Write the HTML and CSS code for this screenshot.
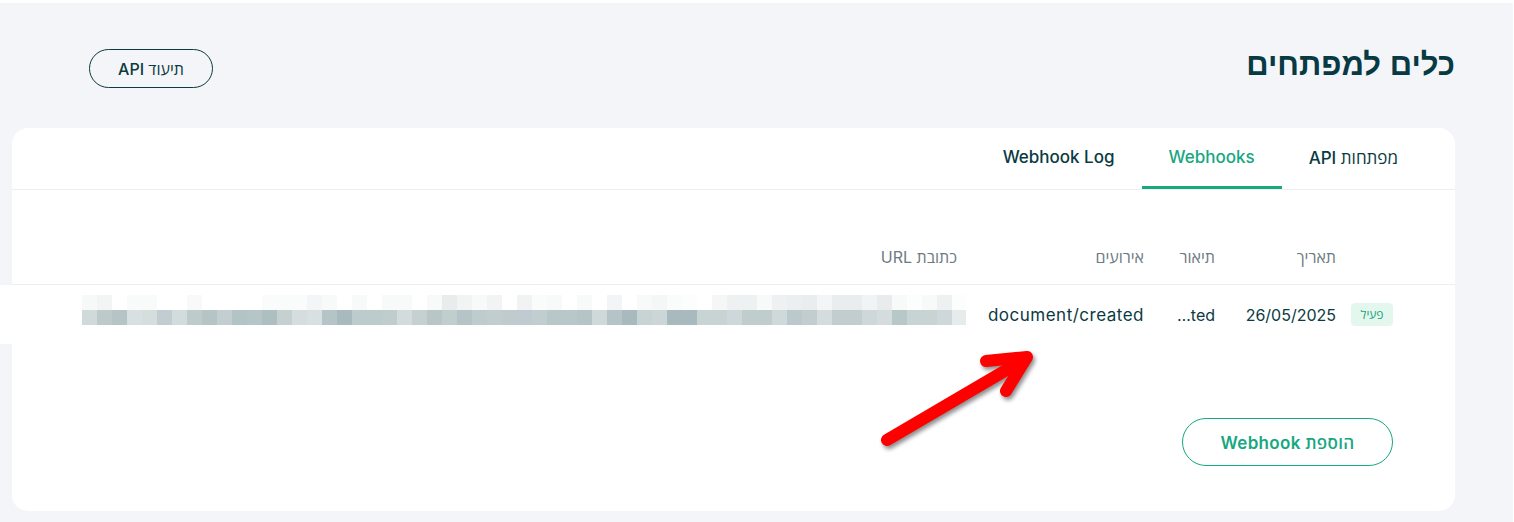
FILE: index.html
```html
<!DOCTYPE html>
<html lang="he" dir="rtl">
<head>
<meta charset="utf-8">
<title>כלים למפתחים</title>
<link rel="stylesheet" href="styles.css">
</head>
<body>
<div class="page">
  <header class="page-header">
    <h1 class="title">כלים למפתחים</h1>
    <button class="btn btn-outline-dark">תיעוד API</button>
  </header>
  <section class="card">
    <nav class="tabs">
      <div class="tab">מפתחות API</div>
      <div class="tab active">Webhooks</div>
      <div class="tab">Webhook Log</div>
    </nav>
    <div class="table">
      <div class="row head">
        <div class="cell"></div>
        <div class="cell">תאריך</div>
        <div class="cell">תיאור</div>
        <div class="cell">אירועים</div>
        <div class="cell">כתובת URL</div>
      </div>
      <div class="row body">
        <div class="cell"><span class="badge">פעיל</span></div>
        <div class="cell">26/05/2025</div>
        <div class="cell"><span dir="ltr">…ted</span></div>
        <div class="cell wide">document/created</div>
        <div class="cell"></div>
      </div>
    </div>
    <div class="actions">
      <button class="btn btn-outline-green">הוספת Webhook</button>
    </div>
  </section>
</div>
<div class="redacted">
  <div class="px px-1"></div>
  <div class="px px-2"></div>
</div>
<svg class="arrow" width="180" height="120" viewBox="0 0 180 120">
  <g fill="none" stroke="#ff0000" stroke-width="12" stroke-linecap="round" stroke-linejoin="round">
    <path d="M17 100 L155 19"/>
    <path d="M116 21 L157 17 L136 51"/>
  </g>
</svg>
</body>
</html>
```
FILE: styles.css
```css
* { box-sizing: border-box; }
html, body { margin: 0; padding: 0; background: #ffffff; }
body {
  font-family: "Inter", "Open Sans", "Liberation Sans", sans-serif;
  color: #0b3a42;
  width: 1514px;
  height: 522px;
  overflow: hidden;
}
.page {
  margin-top: 3px;
  margin-right: 1px;
  height: 519px;
  background: #f4f5f8;
  padding: 0 58px 11px 12px;
  display: flex;
  flex-direction: column;
}
.page-header {
  display: flex;
  align-items: center;
  justify-content: space-between;
  height: 125px;
  padding-left: 77px;
  padding-bottom: 2px;
}
.title {
  margin: 0;
  font-family: "Liberation Sans", "Open Sans", sans-serif;
  font-size: 31px;
  font-weight: 700;
  color: #073a43;
  line-height: 1;
}
.btn {
  font-family: "Inter", "Open Sans", "Liberation Sans", sans-serif;
  background: transparent;
  border-radius: 999px;
  cursor: pointer;
}
.btn-outline-dark {
  width: 124px;
  height: 39px;
  border: 1px solid #0b3a42;
  color: #0b3a42;
  font-size: 16px;
  font-weight: 500;
  margin-top: 8px;
}
.card {
  flex: 1;
  background: #ffffff;
  border-radius: 16px;
  display: flex;
  flex-direction: column;
}
.tabs {
  display: flex;
  height: 62px;
  padding-right: 30px;
  border-bottom: 1px solid #eceef1;
}
.tab {
  display: flex;
  align-items: center;
  padding: 0 27px 3px;
  font-size: 17px;
  font-weight: 500;
  color: #0b3a42;
}
.tab.active {
  color: #17a781;
  padding-bottom: 0;
  border-bottom: 3px solid #17a781;
}
.table { margin-top: 40px; }
.row {
  display: grid;
  grid-template-columns: 57px 121px 71px 187px 1fr;
  padding-right: 62px;
  align-items: center;
}
.row.head {
  height: 55px;
  border-bottom: 1px solid #eceef1;
  font-size: 16px;
  color: #6e7a82;
}
.row.body {
  height: 59px;
  font-size: 16px;
  color: #0b3a42;
}
.cell { white-space: nowrap; }
.cell.wide { font-size: 17px; letter-spacing: 0.5px; }
.badge {
  display: inline-flex;
  align-items: center;
  justify-content: center;
  width: 42px;
  height: 23px;
  border-radius: 4px;
  background: #e4f7ef;
  color: #17a27c;
  font-size: 12px;
  font-weight: 500;
}
.actions {
  display: flex;
  padding: 74px 62px 0 0;
}
.btn-outline-green {
  width: 211px;
  height: 48px;
  border: 1px solid #17a781;
  color: #17a781;
  font-size: 17px;
  font-weight: 600;
  letter-spacing: 0.3px;
}
.redacted {
  position: absolute;
  left: 0;
  top: 285px;
  width: 966px;
  height: 59px;
  background: #ffffff;
  padding: 10px 0 0 82px;
}
.px { width: 884px; height: 15px; }
.px-1 {
  background: linear-gradient(to right,
    #f7f8f8 0 15px, #f3f5f5 15px 30px, #fff 30px 45px, #f9fafa 45px 75px, #fff 75px 105px,
    #f8f9f9 105px 120px, #fff 120px 180px, #fafbfb 180px 225px, #f4f5f7 225px 240px,
    #f8f9f9 240px 255px, #fff 255px 270px, #f8f9f9 270px 285px, #fff 285px 300px,
    #f8f9f9 300px 330px, #fff 330px 345px, #f8f9f9 345px 360px, #e8eced 360px 375px,
    #f2f4f4 375px 390px, #f8f9f9 390px 405px, #f2f3f5 405px 420px, #fff 420px 435px,
    #f1f2f4 435px 450px, #fafbfb 450px 465px, #f8f9f9 465px 480px, #fff 480px 495px,
    #f8f9f9 495px 510px, #fff 510px 525px, #f3f4f6 525px 540px, #fff 540px 555px,
    #f8f9f9 555px 570px, #f5f7f7 570px 585px, #fafbfb 585px 600px, #fcfdfd 600px 615px,
    #fff 615px 630px, #f5f6f6 630px 645px, #eef1f2 645px 675px, #f8f9f9 675px 690px,
    #eef1f2 690px 705px, #ebeff0 705px 720px, #e9edee 720px 735px, #f4f5f6 735px 750px,
    #e9edee 750px 780px, #f1f4f5 780px 795px, #e8eced 795px 810px, #f8f9f9 810px 825px,
    #fcfdfd 825px 840px, #f8f9f9 840px 855px, #eef1f2 855px 870px, #fcfdfd 870px 884px);
}
.px-2 {
  background: linear-gradient(to right,
    #d0dadb 0 15px, #bccac9 15px 30px, #b5c4c5 30px 45px, #d9e0e1 45px 60px, #d5dddd 60px 75px,
    #c1cdd0 75px 90px, #d2dcdd 90px 105px, #bdcbca 105px 120px, #b5c4c5 120px 135px,
    #c2ced0 135px 150px, #b3c4c6 150px 165px, #b5c5c8 165px 180px, #aebfc2 180px 195px,
    #c5d1d1 195px 210px, #d5dddf 210px 225px, #d9e0e1 225px 240px, #b5c4c7 240px 255px,
    #a8babd 255px 270px, #bccbcb 270px 300px, #bfcdcd 300px 315px, #d3dbdc 315px 330px,
    #c5d1d1 330px 345px, #b8c6c8 345px 360px, #c0cecd 360px 375px, #b5c4c7 375px 390px,
    #bfcccd 390px 405px, #c1cdce 405px 420px, #bfcbcc 420px 435px, #bfcbd0 435px 450px,
    #c1cdce 450px 465px, #b8c7c7 465px 480px, #b8c7c9 480px 495px, #b5c4c7 495px 510px,
    #d0d9da 510px 525px, #b5c4c7 525px 540px, #a8babd 540px 555px, #c8d3d4 555px 570px,
    #ccd6d7 570px 585px, #a8babd 585px 615px, #c8d3d4 615px 645px, #ced7d9 645px 660px,
    #bfcdcd 660px 690px, #d0d9da 690px 705px, #bbc8cc 705px 720px, #c1cdce 720px 735px,
    #d5dcdd 735px 750px, #c1cdce 750px 780px, #ced7d9 780px 795px, #d5dcdd 795px 810px,
    #b8c7c7 810px 825px, #c8d3d4 825px 855px, #ced7d9 855px 870px, #e6ebeb 870px 884px);
}
.arrow {
  position: absolute;
  left: 870px;
  top: 340px;
  overflow: visible;
  filter: drop-shadow(2px 3px 2px rgba(0, 0, 0, 0.45));
}
```
